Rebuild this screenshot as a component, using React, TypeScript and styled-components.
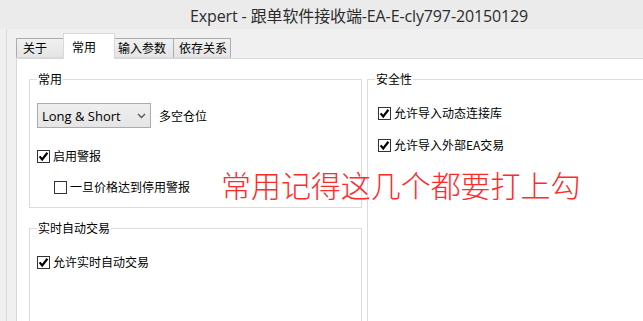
import React from 'react';
import styled, { createGlobalStyle } from 'styled-components';

const Global = createGlobalStyle`
  html, body { margin: 0; padding: 0; background: #f0f0f0; }
  body {
    font-family: "Noto Sans CJK SC", "Noto Sans", sans-serif;
    font-size: 12px;
    color: #000;
  }
`;

const Window = styled.div`
  position: relative;
  width: 643px;
  height: 321px;
  overflow: hidden;
  background: #f0f0f0;
  display: flex;
  flex-direction: column;
`;

const TitleBar = styled.div`
  flex: none;
  height: 29px;
  background: #ebebeb;
  display: flex;
  align-items: center;
  padding-left: 190px;
  font-family: "Open Sans", "Noto Sans CJK SC", sans-serif;
  font-size: 16px;
  letter-spacing: -0.12px;
  color: #2b2b2b;
  white-space: nowrap;
`;

const Client = styled.div`
  flex: none;
  margin-left: 6px;
  border-left: 1px solid #dadada;
  padding-left: 9px;
  display: flex;
  flex-direction: column;
`;

const TabStrip = styled.div`
  flex: none;
  height: 29px;
  display: flex;
  align-items: flex-end;
  position: relative;
  z-index: 1;
`;

const Tab = styled.div<{ $active?: boolean; $w: number; $pl: number }>`
  box-sizing: border-box;
  width: ${p => p.$w}px;
  height: ${p => (p.$active ? 26 : 20)}px;
  margin-bottom: ${p => (p.$active ? -1 : 0)}px;
  margin-right: -1px;
  padding-left: ${p => p.$pl}px;
  display: flex;
  align-items: center;
  border: 1px solid ${p => (p.$active ? '#d9d9d9' : '#acacac')};
  border-bottom: ${p => (p.$active ? 'none' : '1px solid #d9d9d9')};
  background: ${p => (p.$active ? '#ffffff' : 'linear-gradient(#f0f0f0, #e5e5e5)')};
  line-height: 16px;
  white-space: nowrap;
  position: relative;
  z-index: ${p => (p.$active ? 2 : 1)};
`;

const Panel = styled.div`
  box-sizing: border-box;
  width: 720px;
  height: 300px;
  background: #fff;
  border: 1px solid #d9d9d9;
  padding: 12px 0 0 12px;
  display: flex;
  gap: 5px;
`;

const Column = styled.div<{ $w: number }>`
  width: ${p => p.$w}px;
  flex: none;
  display: flex;
  flex-direction: column;
  gap: 12px;
`;

const Group = styled.fieldset<{ $pt: number; $pl: number; $grow?: boolean }>`
  margin: 0;
  min-width: 0;
  border: 1px solid #dcdcdc;
  padding: ${p => p.$pt}px 8px 12px ${p => p.$pl}px;
  display: flex;
  flex-direction: column;
  align-items: flex-start;
  flex: ${p => (p.$grow ? 1 : 'none')};
  & > legend {
    margin-left: ${p => 7 - p.$pl}px;
  }
`;

const Legend = styled.legend`
  padding: 0 1px;
  line-height: 16px;
  height: 16px;
  color: #000;
`;

const SelectRow = styled.div`
  display: flex;
  align-items: center;
  gap: 8px;
  line-height: 16px;
`;

const Select = styled.div`
  box-sizing: border-box;
  width: 114px;
  height: 25px;
  border: 1px solid #acacac;
  background: linear-gradient(#efefef, #e5e5e5);
  display: flex;
  align-items: center;
  justify-content: space-between;
  padding: 0 4px 0 4px;
  font-family: "Open Sans", "Noto Sans", sans-serif;
  font-size: 13px;
  color: #000;
`;

const CheckRow = styled.div<{ $mt: number; $indent?: number }>`
  display: flex;
  align-items: center;
  gap: 3px;
  height: 16px;
  line-height: 16px;
  margin-top: ${p => p.$mt}px;
  margin-left: ${p => p.$indent ?? 0}px;
  white-space: nowrap;
`;

const Box = styled.span`
  box-sizing: border-box;
  width: 13px;
  height: 13px;
  border: 1px solid #333;
  background: #fff;
  display: inline-flex;
  align-items: center;
  justify-content: center;
`;

const Annotation = styled.div`
  position: absolute;
  left: 221px;
  top: 169px;
  font-family: "Noto Sans CJK SC", sans-serif;
  font-weight: 300;
  font-size: 30px;
  line-height: 30px;
  color: #ff2a2a;
  white-space: nowrap;
  letter-spacing: -0.05px;
`;

const Check: React.FC<{ checked?: boolean; label: string; mt: number; indent?: number }> = ({
  checked,
  label,
  mt,
  indent,
}) => (
  <CheckRow $mt={mt} $indent={indent}>
    <Box>
      {checked && (
        <svg width="11" height="11" viewBox="0 0 11 11">
          <path d="M1.6 5.4 L4.2 8.4 L9.4 1.8" fill="none" stroke="#000" strokeWidth="2.2" />
        </svg>
      )}
    </Box>
    <span>{label}</span>
  </CheckRow>
);

export default function App() {
  return (
    <>
      <Global />
      <Window>
        <TitleBar>Expert - 跟单软件接收端-EA-E-cly797-20150129</TitleBar>
        <Client>
          <TabStrip>
            <Tab $w={48} $pl={6}>关于</Tab>
            <Tab $w={52} $pl={8} $active>常用</Tab>
            <Tab $w={60} $pl={3}>输入参数</Tab>
            <Tab $w={58} $pl={5}>依存关系</Tab>
          </TabStrip>
          <Panel>
            <Column $w={333}>
              <Group $pt={16} $pl={7}>
                <Legend>常用</Legend>
                <SelectRow>
                  <Select>
                    <span>Long &amp; Short</span>
                    <svg width="9" height="6" viewBox="0 0 9 6">
                      <path d="M1 1 L4.5 4.5 L8 1" fill="none" stroke="#555" strokeWidth="1.3" />
                    </svg>
                  </Select>
                  <span>多空仓位</span>
                </SelectRow>
                <Check checked label="启用警报" mt={20} />
                <Check label="一旦价格达到停用警报" mt={15} indent={17} />
              </Group>
              <Group $pt={18} $pl={7} $grow>
                <Legend>实时自动交易</Legend>
                <Check checked label="允许实时自动交易" mt={0} />
              </Group>
            </Column>
            <Column $w={340}>
              <Group $pt={18} $pl={10} $grow>
                <Legend>安全性</Legend>
                <Check checked label="允许导入动态连接库" mt={0} />
                <Check checked label="允许导入外部EA交易" mt={16} />
              </Group>
            </Column>
          </Panel>
        </Client>
        <Annotation>常用记得这几个都要打上勾</Annotation>
      </Window>
    </>
  );
}
